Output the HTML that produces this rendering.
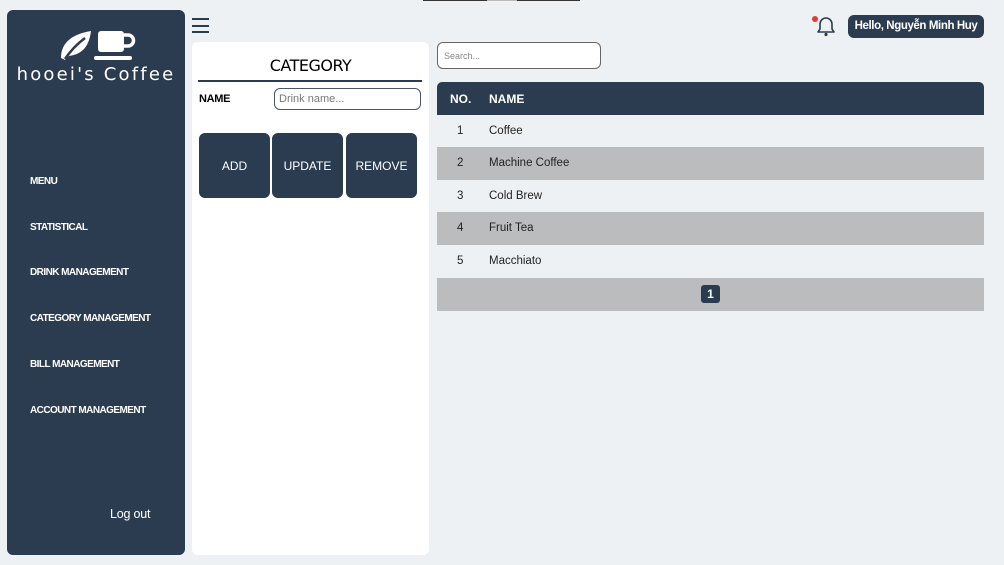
<!DOCTYPE html>
<html><head><meta charset="utf-8"><style>
*{box-sizing:border-box;margin:0;padding:0}
body{width:1004px;height:565px;background:#eef1f3;font-family:"Liberation Sans",sans-serif;position:relative;overflow:hidden}
.abs{position:absolute}
.side{left:7px;top:10px;width:178px;height:545px;background:#2c3c50;border-radius:6px}
.side .nav{position:absolute;left:23px;color:#fff;font-size:10px;font-weight:bold;letter-spacing:-0.55px}
.logo{position:absolute;left:0;width:178px;top:54px;text-align:center;color:#fff;font-size:18px;letter-spacing:2.2px;font-family:"DejaVu Sans",sans-serif}
.panel{left:192px;top:42px;width:237px;height:513px;background:#fff;border-radius:6px}
.btn{position:absolute;top:91px;width:71px;height:65px;background:#2c3c50;border-radius:6px;color:#fff;font-size:12px;display:flex;align-items:center;justify-content:center}
.row{position:absolute;left:437px;width:547px;height:33px;font-size:11.5px;color:#222;font-family:"Liberation Sans",sans-serif}
.row span{position:absolute;top:10px}
</style></head><body>
<div class="abs" style="left:423px;top:0;width:64px;height:1px;background:#333"></div>
<div class="abs" style="left:487px;top:0;width:30px;height:1px;background:#bbb"></div>
<div class="abs" style="left:517px;top:0;width:63px;height:1px;background:#333"></div>

<div class="abs side">
  <svg style="position:absolute;left:50px;top:18px" width="80" height="42" viewBox="0 0 80 42">
    <path d="M4 30 C4 14 16 6 34 3 C32 18 26 26 12 28 L8 32 Z" fill="#fff"/>
    <path d="M8 31 C14 22 20 16 28 10" stroke="#2c3c50" stroke-width="2.5" fill="none"/>
    <rect x="41" y="3" width="26" height="21" rx="3" fill="#fff"/>
    <path d="M67 7 h4 a5.5 5.5 0 0 1 0 11 h-4" stroke="#fff" stroke-width="3.5" fill="none"/>
    <rect x="37" y="28" width="38" height="4" rx="2" fill="#fff"/>
  </svg>
  <div class="logo">hooei's Coffee</div>
  <div class="nav" style="top:166px">MENU</div>
  <div class="nav" style="top:212px">STATISTICAL</div>
  <div class="nav" style="top:257px">DRINK MANAGEMENT</div>
  <div class="nav" style="top:303px">CATEGORY MANAGEMENT</div>
  <div class="nav" style="top:349px">BILL MANAGEMENT</div>
  <div class="nav" style="top:395px">ACCOUNT MANAGEMENT</div>
  <div style="position:absolute;left:103px;top:497px;color:#fff;font-size:12.5px;letter-spacing:-0.2px">Log out</div>
</div>

<div class="abs" style="left:192px;top:18px;width:17px;height:15px">
  <div style="height:2px;background:#2c3c50;margin-bottom:4.5px"></div>
  <div style="height:2px;background:#2c3c50;margin-bottom:4.5px"></div>
  <div style="height:2px;background:#2c3c50"></div>
</div>

<div class="abs panel">
  <div style="position:absolute;left:0;width:237px;top:14px;text-align:center;font-size:16px;font-family:'DejaVu Sans',sans-serif;letter-spacing:-0.5px">CATEGORY</div>
  <div style="position:absolute;left:6px;top:38px;width:224px;height:2px;background:#2c3c50"></div>
  <div style="position:absolute;left:7px;top:51px;font-size:11px;font-weight:bold;letter-spacing:-0.3px">NAME</div>
  <div style="position:absolute;left:82px;top:46px;width:147px;height:22px;border:1.5px solid #4b5563;border-radius:6px;font-size:11px;color:#777;padding:4px 4px">Drink name...</div>
  <div class="btn" style="left:7px">ADD</div>
  <div class="btn" style="left:80px">UPDATE</div>
  <div class="btn" style="left:154px">REMOVE</div>
</div>

<div class="abs" style="left:437px;top:42px;width:164px;height:27px;border:1px solid #666;border-radius:6px;background:#fff;font-size:9px;color:#888;padding:8px 6px">Search...</div>

<svg class="abs" style="left:810px;top:14px" width="28" height="24" viewBox="0 0 28 24">
  <circle cx="5" cy="5" r="3" fill="#e53935"/>
  <path d="M8 18 h16 l-2-3 v-5 a6 6 0 0 0-12 0 v5 z" fill="none" stroke="#2c3c50" stroke-width="1.6" stroke-linejoin="round"/>
  <circle cx="16" cy="20.5" r="1.6" fill="#2c3c50"/>
</svg>
<div class="abs" style="left:848px;top:15px;width:136px;height:23px;background:#2c3c50;border-radius:6px;color:#fff;font-size:11.5px;font-weight:bold;text-align:center;line-height:23px;letter-spacing:-0.4px">Hello, Nguyễn Minh Huy</div>

<div class="abs" style="left:437px;top:82px;width:547px;height:33px;background:#2c3c50;border-radius:5px 5px 0 0;color:#fff;font-size:12px;font-weight:bold">
  <span style="position:absolute;left:13px;top:10px">NO.</span>
  <span style="position:absolute;left:52px;top:10px">NAME</span>
</div>
<div class="row" style="top:115px"><span style="left:20px">1</span><span style="left:52px">Coffee</span></div>
<div class="row" style="top:147px;background:#bbbcbe"><span style="left:20px">2</span><span style="left:52px">Machine Coffee</span></div>
<div class="row" style="top:180px"><span style="left:20px">3</span><span style="left:52px">Cold Brew</span></div>
<div class="row" style="top:212px;background:#bbbcbe"><span style="left:20px">4</span><span style="left:52px">Fruit Tea</span></div>
<div class="row" style="top:245px"><span style="left:20px">5</span><span style="left:52px">Macchiato</span></div>
<div class="row" style="top:278px;background:#bbbcbe">
  <div style="position:absolute;left:264px;top:7px;width:19px;height:18px;background:#2c3c50;border-radius:3px;color:#fff;font-size:12px;font-weight:bold;text-align:center;line-height:18px">1</div>
</div>
</body></html>
